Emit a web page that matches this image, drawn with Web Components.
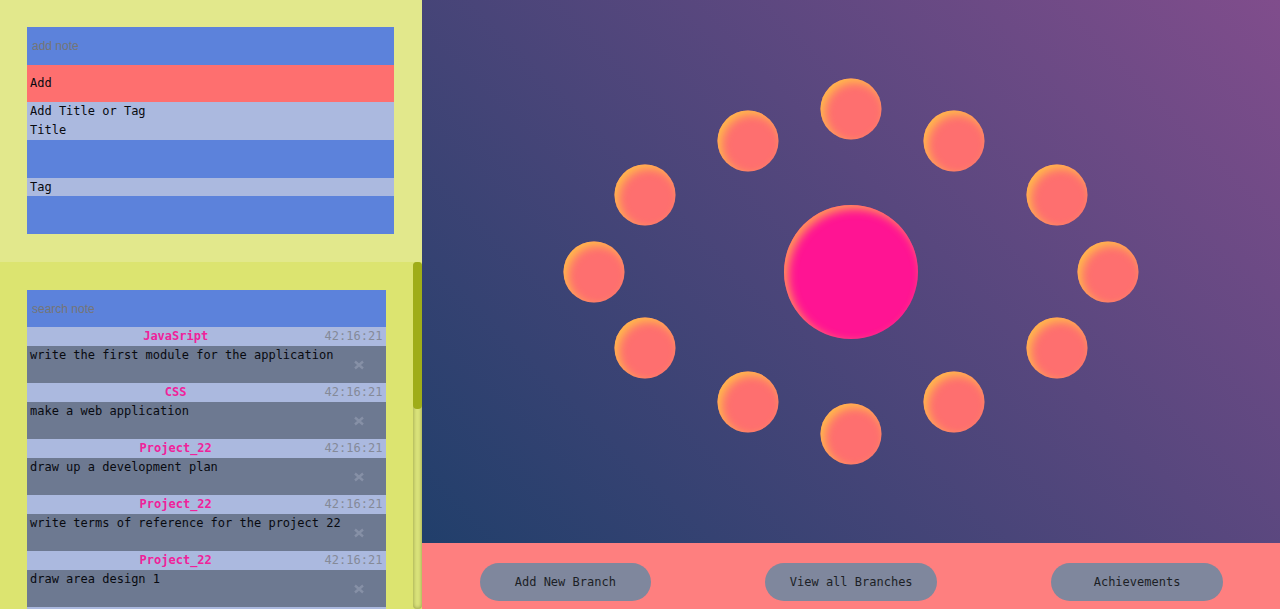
<!DOCTYPE html>
<html lang="en">
<head>
<meta charset="utf-8">
<title>Notes</title>
<style>
html, body { height: 100%; }
body { margin: 0; overflow: hidden; font: 12px/19px "DejaVu Sans Mono", monospace; color: #080a10; }
</style>
</head>
<body>
<notes-app></notes-app>
<script>
const define = (name, html) => {
  const template = document.createElement('template');
  template.innerHTML = html;
  customElements.define(name, class extends HTMLElement {
    constructor() {
      super();
      this.attachShadow({ mode: 'open' }).append(template.content.cloneNode(true));
    }
  });
};

define('note-form', `
<style>
:host { display: block; padding: 27px 28px 28px 27px; background: #e2e88c; }
form { display: grid; grid-template-rows: 2fr 2fr 1fr 1fr 2fr 1fr 2fr; height: 207px; background: #abb9df; }
input, button { box-sizing: border-box; width: 100%; min-height: 0; margin: 0; border: 0; border-radius: 0; outline: 0; }
input { padding: 0 5px; background: #5c82db; font: 12px "Liberation Sans", sans-serif; }
input::placeholder { color: #757575; }
button { padding: 0 3px; background: #fe6f6f; color: inherit; font: inherit; text-align: left; }
label, span { padding: 0 3px; line-height: 19px; min-height: 0; }
</style>
<form>
  <input type="text" placeholder="add note" aria-label="add note">
  <button type="button">Add</button>
  <span>Add Title or Tag</span>
  <label for="title">Title</label>
  <input id="title" type="text">
  <label for="tag">Tag</label>
  <input id="tag" type="text">
</form>`);

define('note-item', `
<style>
:host { display: block; }
header { display: grid; grid-template-columns: 1fr 64px; height: 19px; padding-right: 4px; background: #abb9df; }
.title { display: block; padding-left: 6px; color: #f0219a; font-weight: bold; text-align: center; }
time { color: #858a98; text-align: right; white-space: nowrap; }
.body { display: flex; justify-content: space-between; height: 37px; padding: 0 18px 0 3px; background: #6d7991; }
p { margin: 0; line-height: 18px; white-space: nowrap; }
button { align-self: center; width: 18px; height: 18px; padding: 0; border: 0; background: none; color: #8690a6; }
svg { display: block; margin: auto; }
</style>
<header><slot name="title" class="title"></slot><time><slot name="time"></slot></time></header>
<div class="body"><p><slot></slot></p>
<button type="button" aria-label="Delete"><svg width="10" height="10" viewBox="0 0 10 10"><path d="M1 1.5L9 8.5M9 1.5L1 8.5" stroke="currentColor" stroke-width="2.4"/></svg></button></div>`);

define('note-list', `
<style>
:host { display: grid; grid-template-columns: 1fr 9px; min-height: 0; background: #dce470; overflow: hidden; }
.notes { min-height: 0; overflow: hidden; padding: 28px 27px 0 27px; }
input { display: block; box-sizing: border-box; width: 100%; height: 37px; padding: 0 5px; border: 0; border-radius: 0; outline: 0; background: #5c82db; font: 12px "Liberation Sans", sans-serif; }
input::placeholder { color: #757575; }
.track { background: #dce47c; border-radius: 4px; box-shadow: inset 0 0 4px #8d9440; }
.thumb { height: 147px; border-radius: 4px; background: #9fad18; }
</style>
<div class="notes">
  <input type="search" placeholder="search note" aria-label="search note">
  <slot></slot>
</div>
<div class="track"><div class="thumb"></div></div>`);

define('branch-map', `
<style>
:host { display: block; position: relative; min-height: 0; background: linear-gradient(45deg, #213f6b, #804d8c); }
button { position: absolute; left: var(--x); top: var(--y); width: 61px; height: 61px; padding: 0; border: 0; border-radius: 50%; background: #fe6f6f; box-shadow: inset 4px 4px 10px #ffbc4a; transform: translate(-50%, -50%); }
.core { width: 134px; height: 134px; background: #ff1493; box-shadow: inset 4px 4px 10px #ff9c55; }
</style>
<button class="core" style="--x:50%;--y:50%" aria-label="Core"></button>
<button style="--x:50%;--y:20%" aria-label="Branch"></button>
<button style="--x:62%;--y:26%" aria-label="Branch"></button>
<button style="--x:74%;--y:36%" aria-label="Branch"></button>
<button style="--x:80%;--y:50%" aria-label="Branch"></button>
<button style="--x:74%;--y:64%" aria-label="Branch"></button>
<button style="--x:62%;--y:74%" aria-label="Branch"></button>
<button style="--x:50%;--y:80%" aria-label="Branch"></button>
<button style="--x:38%;--y:74%" aria-label="Branch"></button>
<button style="--x:26%;--y:64%" aria-label="Branch"></button>
<button style="--x:20%;--y:50%" aria-label="Branch"></button>
<button style="--x:26%;--y:36%" aria-label="Branch"></button>
<button style="--x:38%;--y:26%" aria-label="Branch"></button>`);

define('branch-actions', `
<style>
:host { display: flex; justify-content: space-around; padding: 20px 0 8px; background: #fe7f7f; }
button { width: 20%; height: 38px; padding: 0; border: 0; border-radius: 19px; background: #7f879d; color: #1c1f26; font: inherit; white-space: nowrap; }
</style>
<button type="button">Add New Branch</button>
<button type="button">View all Branches</button>
<button type="button">Achievements</button>`);

define('notes-app', `
<style>
:host { display: grid; grid-template-columns: 33fr 67fr; height: 100vh; }
aside, main { display: grid; min-width: 0; min-height: 0; }
aside { grid-template-rows: auto 1fr; }
main { grid-template-rows: 1fr auto; }
</style>
<aside>
  <note-form></note-form>
  <note-list>
    <note-item><span slot="title">JavaSript</span><span slot="time">42:16:21</span>write the first module for the application</note-item>
    <note-item><span slot="title">CSS</span><span slot="time">42:16:21</span>make a web application</note-item>
    <note-item><span slot="title">Project_22</span><span slot="time">42:16:21</span>draw up a development plan</note-item>
    <note-item><span slot="title">Project_22</span><span slot="time">42:16:21</span>write terms of reference for the project 22</note-item>
    <note-item><span slot="title">Project_22</span><span slot="time">42:16:21</span>draw area design 1</note-item>
    <note-item></note-item>
  </note-list>
</aside>
<main>
  <branch-map></branch-map>
  <branch-actions></branch-actions>
</main>`);
</script>
</body>
</html>
